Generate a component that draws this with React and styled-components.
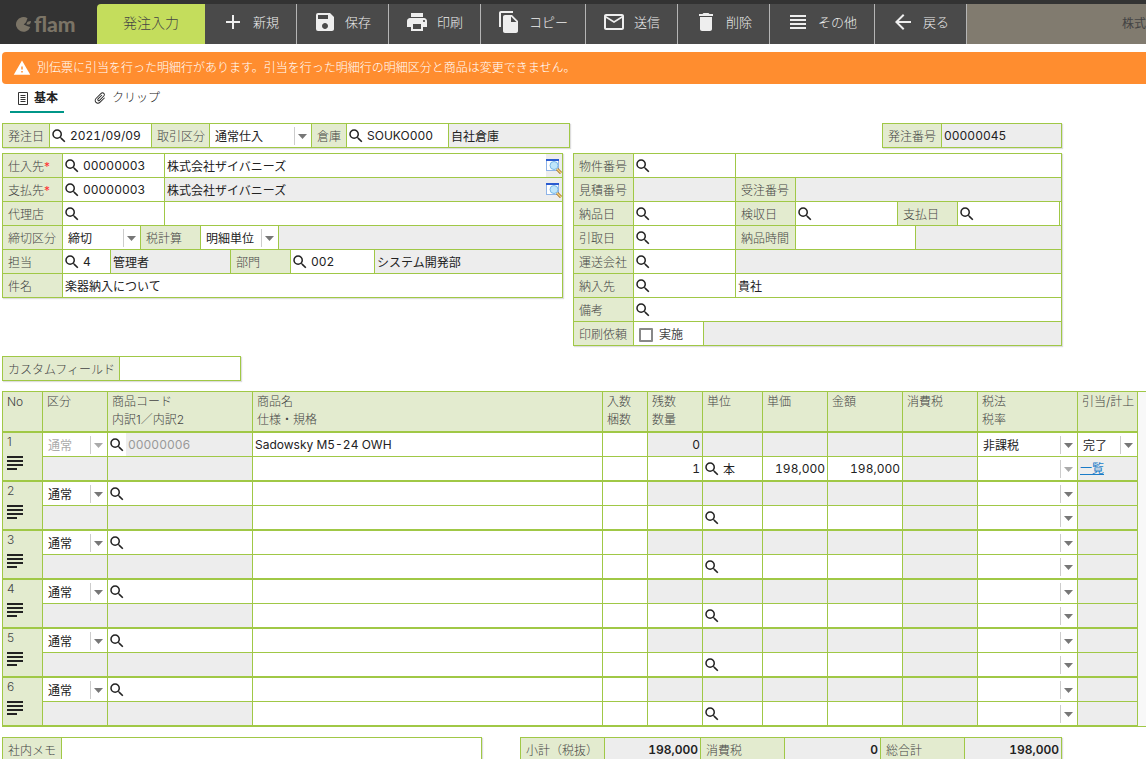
import styled, { createGlobalStyle, css } from "styled-components";
import {
    MdAdd, MdSave, MdPrint, MdFileCopy, MdMailOutline, MdDelete,
    MdViewHeadline, MdArrowBack, MdSearch, MdWarning, MdSubject, MdAttachFile,
} from "react-icons/md";

const GREEN = "#a0c846";
const LABEL_BG = "#e3ebcf";
const GREY = "#ededed";

const GlobalStyle = createGlobalStyle`
    * { box-sizing: border-box; }
    body {
        margin: 0;
        background: #fff;
        color: #222;
        font: 12px/18px Inter, "Noto Sans CJK JP", sans-serif;
        overflow: hidden;
    }
    button, input, select, textarea {
        font: inherit;
        color: inherit;
        border: 0;
        margin: 0;
        padding: 0;
        background: none;
        border-radius: 0;
    }
`;

/* ---------- header ---------- */

const Header = styled.header`
    display: flex;
    height: 44px;
    padding-top: 4px;
    background: #333;
    overflow: hidden;
`;

const Logo = styled.div`
    flex: none;
    display: flex;
    width: 97px;
    padding-left: 15px;
    color: #7b7466;
`;

const ScreenName = styled.h1`
    flex: none;
    width: 108px;
    margin: 0;
    border-radius: 4px 0 0 0;
    background: #c4dd5c;
    color: #444;
    font-size: 14px;
    font-weight: 300;
    line-height: 38px;
    text-align: center;
`;

const ToolButton = styled.button`
    flex: none;
    display: flex;
    align-items: center;
    gap: 8px;
    padding: 0 17px 4px 16px;
    border-right: 1px solid #b5b5b5;
    background: #4a4a4a;
    color: #eee;
    font-size: 13px;
    font-weight: 300;

    svg { font-size: 24px; }
`;

const Company = styled.div`
    flex: 1;
    min-width: 0;
    display: flex;
    justify-content: flex-end;
    background: #817b6f;
    color: #444;
    line-height: 40px;
    overflow: hidden;
`;

/* ---------- notice and tabs ---------- */

const Notice = styled.div`
    display: flex;
    align-items: center;
    gap: 6px;
    height: 32px;
    margin: 8px 0 0 2px;
    padding-left: 11px;
    border-radius: 4px 0 0 4px;
    background: #ff8d2f;
    color: #fff;
    font-weight: 300;

    svg { font-size: 18px; }
`;

const Tabs = styled.nav`
    display: flex;
    gap: 22px;
    height: 29px;
    padding-left: 10px;
`;

const Tab = styled.button`
    display: flex;
    align-items: center;
    gap: 5px;
    padding: 1px 6px 0 7px;
    border-bottom: 2px solid ${({ $on }) => ($on ? "#009688" : "transparent")};
    font-weight: ${({ $on }) => ($on ? 600 : 300)};
`;

const ClipIcon = styled(MdAttachFile)`
    font-size: 14px;
    transform: rotate(45deg);
`;

/* ---------- form boxes ---------- */

const Form = styled.div`
    display: grid;
    gap: 5px;
    padding: 10px 84px 0 2px;
`;

const Line = styled.div`
    display: flex;
    justify-content: space-between;
`;

const Halves = styled.div`
    display: grid;
    grid-template-columns: minmax(0, 561fr) minmax(0, 489fr);
    align-items: start;
    gap: 10px;
`;

const Box = styled.div`
    width: ${({ $w }) => ($w ? `${$w}px` : "auto")};
    border: 1px solid ${GREEN};
    box-shadow: 1px 1px 1px #ddd;
`;

const Row = styled.div`
    display: flex;
    height: 24px;

    &:last-child { height: 23px; }
    &:not(:last-child) { border-bottom: 1px solid ${GREEN}; }
`;

const cell = css`
    display: flex;
    align-items: center;
    flex: ${({ $w }) => ($w ? `0 0 ${$w}px` : "1 1 0")};
    min-width: 0;

    &:not(:last-child) { border-right: 1px solid ${GREEN}; }
`;

const LabelCell = styled.label`
    ${cell}
    padding: 2px 0 0 5px;
    background: ${LABEL_BG};
    color: #444;
    font-weight: 300;
    white-space: nowrap;

    em {
        color: #f33;
        font-style: normal;
        font-weight: 400;
    }
`;

const Cell = styled.div`
    ${cell}
    background: ${({ $grey }) => ($grey ? GREY : "#fff")};
`;

const Input = styled.input`
    flex: 1;
    width: 100%;
    min-width: 0;
    height: 23px;
    padding: ${({ $right }) => ($right ? "0 2px 0 0" : "0 0 0 2px")};
    text-align: ${({ $right }) => ($right ? "right" : "left")};
    font-weight: ${({ $bold }) => ($bold ? 600 : 400)};
    font-variant-numeric: tabular-nums;
    outline: 0;

    &:disabled {
        background: ${GREY};
        color: #999;
    }
`;

const SearchButton = styled.button`
    flex: none;
    display: flex;
    color: #222;

    svg { font-size: 18px; }
`;

const PopupButton = styled.button`
    flex: none;
    display: flex;
    align-items: center;
    height: 23px;
    background: ${GREY};
`;

const SelectWrap = styled.span`
    flex: 1;
    display: flex;
    align-items: center;
    min-width: 0;
    height: 23px;
    background: #fff;
    color: ${({ $off }) => ($off ? "#aaa" : "#222")};
`;

const SelectBox = styled.select`
    flex: 1;
    min-width: 0;
    height: 23px;
    padding: 2px 0 0 5px;
    appearance: none;
    outline: 0;
    opacity: 1;
`;

const Arrow = styled.svg`
    flex: none;
    width: 17px;
    height: 18px;
    border-left: 1px solid #ccc;
    fill: ${({ $off }) => ($off ? "#aaa" : "#777")};
`;

const Check = styled.label`
    display: flex;
    align-items: center;
    gap: 6px;
    padding: 2px 0 0 5px;
    color: #444;
`;

const CheckBox = styled.input`
    appearance: none;
    width: 14px;
    height: 14px;
    border: 2px solid #888;
    border-radius: 1px;
    background: #fff;
`;

/* ---------- detail grid ---------- */

const GridPane = styled.div`
    margin: 10px 0 0 2px;
    padding-right: 8px;
    border: solid ${GREEN};
    border-width: 1px 0 1px 1px;
    background: #f8f8f8;
`;

const HeadCell = styled.th`
    width: ${({ $w }) => ($w ? `${$w}px` : "auto")};
    height: 41px;
    padding: 1px 0 0 4px;
    border-right: 1px solid ${GREEN};
    border-bottom: 2px solid ${GREEN};
    background: ${LABEL_BG};
    color: #444;
    font-weight: 300;
    text-align: left;
    vertical-align: top;
    white-space: pre;
`;

const NoCell = styled.th`
    padding: 0 0 0 4px;
    border-right: 1px solid ${GREEN};
    border-bottom: 2px solid ${GREEN};
    background: ${LABEL_BG};
    color: #444;
    font-weight: 300;
    text-align: left;
    vertical-align: top;
`;

const MemoButton = styled.button`
    display: flex;
    margin-left: -4px;
    color: #222;

    svg { font-size: 24px; }
`;

const Td = styled.td`
    height: ${({ $end }) => ($end ? 25 : 24)}px;
    padding: 0;
    border-right: 1px solid ${GREEN};
    border-bottom: ${({ $end }) => ($end ? 2 : 1)}px solid ${GREEN};
    background: ${({ $grey }) => ($grey ? GREY : "#fff")};
`;

const Inner = styled.div`
    display: flex;
    align-items: center;
    height: 23px;
`;

const Grid = styled.table`
    width: 100%;
    table-layout: fixed;
    border-collapse: separate;
    border-spacing: 0;

    tbody:last-child tr:last-child ${Td} {
        height: 24px;
        border-bottom-width: 1px;
    }
    tbody:last-child ${NoCell} { border-bottom-width: 1px; }
`;

const Link = styled.a`
    padding-left: 2px;
    color: #1a7cc8;
`;

/* ---------- lone rows ---------- */

const Strip = styled.div`
    display: flex;
    justify-content: space-between;
    padding: 10px 84px 0 2px;
`;

/* ---------- parts ---------- */

const FlamMark = () => (
    <svg width="64" height="32" viewBox="0 0 64 32" role="img" aria-label="flam">
        <path d="M12.500 14.200A7.400 7.400 0 1 0 15.300 23l-2.600-.8-4-1.700 2.300-2.300z" fill="currentColor" />
        <path d="M11.500 20.500c0-2.500 1.500-3.600 4.500-3.600 0 2.800-1.500 4-4.500 3.600z" fill="currentColor" />
        <text x="19" y="28" fontFamily="Lato, sans-serif" fontWeight="900" fontSize="21" fill="currentColor">flam</text>
    </svg>
);

const PageIcon = () => (
    <svg width="12" height="13" viewBox="0 0 12 13" fill="none" stroke="#333">
        <path d="M1.500 .5h9v12h-9zM3.500 3.500h5M3.500 5.500h5M3.500 7.500h5M3.500 9.500h5" />
    </svg>
);

const PopupIcon = () => (
    <svg width="16" height="16" viewBox="0 0 16 16">
        <rect x=".5" y="1.500" width="12" height="11" fill="#fff" stroke="#8fb4e8" />
        <path d="M0 1h13v2H0z" fill="#2a5bd0" />
        <path d="M11 11l4 4" stroke="#a06a20" strokeWidth="3" />
        <path d="M11 11l4 4" stroke="#f5d27a" strokeWidth="1.500" />
        <circle cx="8" cy="7.500" r="4" fill="#bfe6fb" stroke="#7ab8e6" />
    </svg>
);

const Search = ({ label, value = "", disabled }) => (
    <>
        <SearchButton type="button" aria-label={`${label} 検索`}><MdSearch /></SearchButton>
        <Input aria-label={label} defaultValue={value} disabled={disabled} />
    </>
);

const Select = ({ label, value = "", off }) => (
    <SelectWrap $off={off}>
        <SelectBox aria-label={label} disabled={off}>
            <option>{value}</option>
        </SelectBox>
        <Arrow $off={off} viewBox="0 0 16 18"><path d="M3 7h9l-4.500 5z" /></Arrow>
    </SelectWrap>
);

const Label = ({ w, id, must, children }) => (
    <LabelCell $w={w} htmlFor={id}>{children}{must && <em>*</em>}</LabelCell>
);

const Text = ({ w, grey, id, label, value = "", right, bold, children }) => (
    <Cell $w={w} $grey={grey}>
        <Input id={id} aria-label={label} defaultValue={value} readOnly={grey} $right={right} $bold={bold} />
        {children}
    </Cell>
);

const SearchCell = ({ w, ...rest }) => <Cell $w={w}><Search {...rest} /></Cell>;
const SelectCell = ({ w, ...rest }) => <Cell $w={w}><Select {...rest} /></Cell>;

const Popup = () => <PopupButton type="button" aria-label="参照"><PopupIcon /></PopupButton>;

const tools = [
    [MdAdd, "新規"],
    [MdSave, "保存"],
    [MdPrint, "印刷"],
    [MdFileCopy, "コピー"],
    [MdMailOutline, "送信"],
    [MdDelete, "削除"],
    [MdViewHeadline, "その他"],
    [MdArrowBack, "戻る"],
];

const columns = [
    ["No", 40],
    ["区分", 65],
    ["商品コード\n内訳1／内訳2", 145],
    ["商品名\n仕様・規格"],
    ["入数\n梱数", 45],
    ["残数\n数量", 55],
    ["単位", 60],
    ["単価", 65],
    ["金額", 75],
    ["消費税", 75],
    ["税法\n税率", 100],
    ["引当/計上", 60],
];

const details = [
    {
        code: "00000006", name: "Sadowsky M5-24 OWH", rest: "0", qty: "1", unit: "本",
        price: "198,000", amount: "198,000", tax: "非課税", state: "完了",
    },
    {}, {}, {}, {}, {},
];

const Detail = ({ no, item }) => {
    const fixed = Boolean(item.code);

    return <tbody>
        <tr>
            <NoCell rowSpan={2} scope="rowgroup">
                {no}
                <MemoButton type="button" aria-label="明細メモ"><MdSubject /></MemoButton>
            </NoCell>
            <Td><Inner><Select label="区分" value="通常" off={fixed} /></Inner></Td>
            <Td><Inner><Search label="商品コード" value={item.code} disabled={fixed} /></Inner></Td>
            <Td><Inner><Input aria-label="商品名" defaultValue={item.name} /></Inner></Td>
            <Td><Inner><Input aria-label="入数" /></Inner></Td>
            <Td $grey><Inner><Input aria-label="残数" defaultValue={item.rest} readOnly $right /></Inner></Td>
            <Td $grey />
            <Td $grey />
            <Td $grey />
            <Td $grey />
            <Td><Inner><Select label="税法" value={item.tax} /></Inner></Td>
            <Td $grey={!fixed}>{fixed && <Inner><Select label="引当/計上" value={item.state} /></Inner>}</Td>
        </tr>
        <tr>
            <Td $end $grey />
            <Td $end $grey />
            <Td $end><Inner><Input aria-label="仕様・規格" /></Inner></Td>
            <Td $end><Inner><Input aria-label="梱数" /></Inner></Td>
            <Td $end><Inner><Input aria-label="数量" defaultValue={item.qty} $right /></Inner></Td>
            <Td $end><Inner><Search label="単位" value={item.unit} /></Inner></Td>
            <Td $end><Inner><Input aria-label="単価" defaultValue={item.price} $right /></Inner></Td>
            <Td $end><Inner><Input aria-label="金額" defaultValue={item.amount} $right /></Inner></Td>
            <Td $end $grey />
            <Td $end><Inner><Select label="税率" off={fixed} /></Inner></Td>
            <Td $end $grey>{fixed && <Inner><Link href="#list">一覧</Link></Inner>}</Td>
        </tr>
    </tbody>;
};

const App = () => {

    return <>
        <GlobalStyle />
        <Header>
            <Logo><FlamMark /></Logo>
            <ScreenName>発注入力</ScreenName>
            {tools.map(([Icon, text]) => (
                <ToolButton key={text} type="button"><Icon />{text}</ToolButton>
            ))}
            <Company>株式</Company>
        </Header>
        <Notice role="alert">
            <MdWarning />
            別伝票に引当を行った明細行があります。引当を行った明細行の明細区分と商品は変更できません。
        </Notice>
        <Tabs>
            <Tab type="button" $on><PageIcon />基本</Tab>
            <Tab type="button"><ClipIcon />クリップ</Tab>
        </Tabs>

        <Form>
            <Line>
                <Box $w={568}>
                    <Row>
                        <Label w={47}>発注日</Label>
                        <SearchCell w={102} label="発注日" value="2021/09/09" />
                        <Label w={58}>取引区分</Label>
                        <SelectCell w={102} label="取引区分" value="通常仕入" />
                        <Label w={35}>倉庫</Label>
                        <SearchCell w={102} label="倉庫" value="SOUKO000" />
                        <Text grey label="倉庫名" value="自社倉庫" />
                    </Row>
                </Box>
                <Box $w={180}>
                    <Row>
                        <Label w={59} id="order-no">発注番号</Label>
                        <Text grey id="order-no" value="00000045" />
                    </Row>
                </Box>
            </Line>
            <Halves>
                <Box>
                    <Row>
                        <Label w={60} must>仕入先</Label>
                        <SearchCell w={102} label="仕入先" value="00000003" />
                        <Text label="仕入先名" value="株式会社ザイバニーズ"><Popup /></Text>
                    </Row>
                    <Row>
                        <Label w={60} must>支払先</Label>
                        <SearchCell w={102} label="支払先" value="00000003" />
                        <Text grey label="支払先名" value="株式会社ザイバニーズ"><Popup /></Text>
                    </Row>
                    <Row>
                        <Label w={60}>代理店</Label>
                        <SearchCell w={102} label="代理店" />
                        <Text label="代理店名" />
                    </Row>
                    <Row>
                        <Label w={60}>締切区分</Label>
                        <SelectCell w={78} label="締切区分" value="締切" />
                        <Label w={60}>税計算</Label>
                        <SelectCell w={78} label="税計算" value="明細単位" />
                        <Cell $grey />
                    </Row>
                    <Row>
                        <Label w={60}>担当</Label>
                        <SearchCell w={48} label="担当" value="4" />
                        <Text w={120} grey label="担当者名" value="管理者" />
                        <Label w={60}>部門</Label>
                        <SearchCell w={84} label="部門" value="002" />
                        <Text grey label="部門名" value="システム開発部" />
                    </Row>
                    <Row>
                        <Label w={60} id="subject">件名</Label>
                        <Text id="subject" value="楽器納入について" />
                    </Row>
                </Box>
                <Box>
                    <Row>
                        <Label w={60}>物件番号</Label>
                        <SearchCell w={102} label="物件番号" />
                        <Text label="物件名" />
                    </Row>
                    <Row>
                        <Label w={60} id="quote-no">見積番号</Label>
                        <Text w={102} grey id="quote-no" />
                        <Label w={60} id="sales-no">受注番号</Label>
                        <Text grey id="sales-no" />
                    </Row>
                    <Row>
                        <Label w={60}>納品日</Label>
                        <SearchCell w={102} label="納品日" />
                        <Label w={60}>検収日</Label>
                        <SearchCell w={102} label="検収日" />
                        <Label w={60}>支払日</Label>
                        <SearchCell w={102} label="支払日" />
                        <Cell />
                    </Row>
                    <Row>
                        <Label w={60}>引取日</Label>
                        <SearchCell w={102} label="引取日" />
                        <Label w={60} id="delivery-time">納品時間</Label>
                        <Text w={120} id="delivery-time" />
                        <Cell $grey />
                    </Row>
                    <Row>
                        <Label w={60}>運送会社</Label>
                        <SearchCell w={102} label="運送会社" />
                        <Text grey label="運送会社名" />
                    </Row>
                    <Row>
                        <Label w={60}>納入先</Label>
                        <SearchCell w={102} label="納入先" />
                        <Text label="納入先名" value="貴社" />
                    </Row>
                    <Row>
                        <Label w={60}>備考</Label>
                        <SearchCell label="備考" />
                    </Row>
                    <Row>
                        <Label w={60} id="print">印刷依頼</Label>
                        <Cell $w={70}><Check><CheckBox type="checkbox" id="print" />実施</Check></Cell>
                        <Cell $grey />
                    </Row>
                </Box>
            </Halves>
        </Form>

        <Strip>
            <Box $w={239}>
                <Row>
                    <Label w={117} id="custom">カスタムフィールド</Label>
                    <Text id="custom" />
                </Row>
            </Box>
        </Strip>

        <GridPane>
            <Grid>
                <thead>
                    <tr>
                        {columns.map(([text, w]) => <HeadCell key={text} scope="col" $w={w}>{text}</HeadCell>)}
                    </tr>
                </thead>
                {details.map((item, i) => <Detail key={i} no={i + 1} item={item} />)}
            </Grid>
        </GridPane>

        <Strip>
            <Box $w={480}>
                <Row>
                    <Label w={59} id="memo">社内メモ</Label>
                    <Text id="memo" />
                </Row>
            </Box>
            <Box $w={542}>
                <Row>
                    <Label w={84} id="subtotal">小計（税抜）</Label>
                    <Text w={96} grey right bold id="subtotal" value="198,000" />
                    <Label w={84} id="tax">消費税</Label>
                    <Text w={96} grey right bold id="tax" value="0" />
                    <Label w={84} id="total">総合計</Label>
                    <Text grey right bold id="total" value="198,000" />
                </Row>
            </Box>
        </Strip>
    </>
};

export default App;
